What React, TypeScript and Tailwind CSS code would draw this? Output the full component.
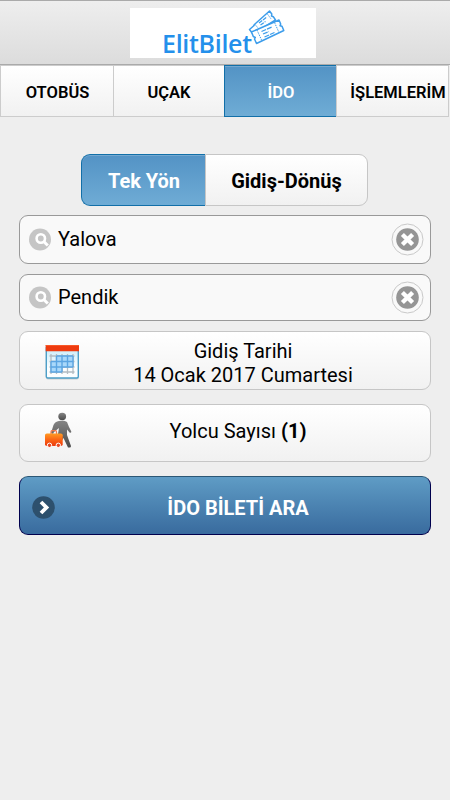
import React from "react";

const tabBase =
  "flex h-[52px] items-center justify-center border-y border-[#ccc] pt-[5px] text-[16.5px] font-semibold leading-none";
const light = "bg-gradient-to-b from-white to-[#f1f1f1]";
const blue = "bg-gradient-to-b from-[#5393c5] to-[#6facd5]";
const field =
  "flex items-center rounded-[9px] border border-[#999] bg-[#f9f9f9] pl-[9px] pr-[6px] text-[20px]";
const card =
  "flex items-center rounded-[9px] border border-[#c6c6c6] text-[20px] leading-6 bg-gradient-to-b from-white to-[#f1f1f1]";

function Tickets() {
  return (
    <svg className="absolute left-[118px] top-[1px]" width="38" height="37" viewBox="0 0 38 37" fill="none" stroke="#3d9deb" strokeWidth="1.5" strokeLinejoin="round">
      <path d="m1.500 20.500 4-3.500 1-1.500 1-1L21.500 2l2.300 3-.3 2 1.800.7 2.200 3.300L5 25z" fill="white" />
      <path d="m7 15.500 4 4.500M19 4.500l4.500 6" strokeWidth="1" strokeDasharray="1.500 1" />
      <path d="m11 14 8-6M12.500 16l5-3.500" strokeWidth="1.200" strokeDasharray="4 1" />
      <path d="M3.500 23 31 11l1.700 4-.7 1.700 2 .6 1.800 4.200L8.500 34.500l-2-4.500.8-1.500-2-1z" fill="white" />
      <path d="m9 21 5 11M26.500 13.500l4.500 10" strokeWidth="1" strokeDasharray="1.500 1" />
      <path d="m13.500 22.500 10.500-4.500M15 25l6-2.500M16.500 28l10-4.500" strokeWidth="1.200" strokeDasharray="5 1" />
    </svg>
  );
}

function SearchIcon() {
  return (
    <svg width="22" height="23" viewBox="0 0 22 23" fill="none">
      <circle cx="11" cy="11.500" r="11" fill="#c5c5c5" />
      <circle cx="11.800" cy="10.500" r="4.200" stroke="white" strokeWidth="2.600" />
      <path d="m15 13.700 3.800 3.800" stroke="white" strokeWidth="3" />
    </svg>
  );
}

function ClearIcon() {
  return (
    <svg className="ml-auto" width="33" height="33" viewBox="0 0 33 33" fill="none">
      <circle cx="16.5" cy="16.5" r="15.5" fill="#f9f9f9" stroke="#c9c9c9" />
      <circle cx="16.5" cy="16.5" r="11.3" fill="#959595" />
      <path d="m11.400 11.400 10.200 10.200M21.600 11.400 11.400 21.600" stroke="white" strokeWidth="4.300" />
    </svg>
  );
}

function CalendarIcon() {
  return (
    <svg className="mt-[2px]" width="35" height="36" viewBox="0 0 35 36" fill="none">
      <defs>
        <linearGradient id="page" x1="0" y1="0" x2="0" y2="1">
          <stop stopColor="#c3ebfa" /><stop offset=".7" stopColor="#fbfeff" />
        </linearGradient>
      </defs>
      <rect x=".8" y="3" width="33" height="32.5" rx="2" fill="#8c9ca3" opacity=".4" />
      <rect x="1.300" y="2" width="32" height="32" rx="1.500" fill="url(#page)" stroke="#4d9fc8" strokeWidth="1.400" />
      <path d="M6 10v20M11.500 10v20M17 10v20M22.500 10v20M28 10v20M4.500 12h25M4.500 17.500h25M4.500 23h25M4.500 28h25" stroke="#b3bcc2" strokeWidth="1.300" />
      <path d="M11.500 12H28v11H17v5H6V17.500h5.500z" fill="#a9d8fa" />
      <path d="M6 17.500h22M6 23h22M11.500 12v16M17 12v16M22.500 12v11M28 12v11M11.500 12H28M6 17.500V28h11" stroke="#5ba5e2" strokeWidth="1.400" />
      <path d="M.7 1h33.300v6.300H.7z" fill="#ee3b10" />
      <path d="M.7 1h33.300v1H.7z" fill="#f85828" />
    </svg>
  );
}

function TravelerIcon() {
  return (
    <svg className="-mt-[6px]" width="27" height="36" viewBox="0 0 27 36" fill="none">
      <defs>
        <linearGradient id="body" x1="0" y1="0" x2="0" y2="1">
          <stop stopColor="#858585" /><stop offset="1" stopColor="#4c4c4c" />
        </linearGradient>
        <linearGradient id="bag" x1="0" y1="0" x2="0" y2="1">
          <stop stopColor="#ff9b24" /><stop offset=".5" stopColor="#fb6415" /><stop offset="1" stopColor="#eb390d" />
        </linearGradient>
      </defs>
      <ellipse cx="17.200" cy="4.400" rx="3.900" ry="3.700" fill="url(#body)" />
      <path d="M14 9q5-1.500 8 1l2 5 2.300 4.500q.2 1.500-1.500 1.300L22 17.500V23l4 11q0 1.500-1.300 1.500H23L18.500 26 14 33l-3 1 3-18-5 4-1 2-2-1 2.500-8Q10 9.500 14 9z" fill="url(#body)" />
      <path d="M6 22v-2.300q0-1 1-1h3.500q1 0 1 1V22" stroke="#f2774a" strokeWidth="1.200" />
      <rect x="0" y="21.500" width="17.700" height="12.500" rx="1.800" fill="url(#bag)" />
      <circle cx="4.500" cy="33.300" r="2.200" fill="#e54a25" stroke="white" />
      <circle cx="13.300" cy="33.300" r="2.200" fill="#e54a25" stroke="white" />
    </svg>
  );
}

export default function App() {
  return (
    <div className="h-[800px] w-[450px] overflow-hidden bg-[#eee] font-['Roboto',sans-serif] text-black">
      <header className="flex h-[65px] items-center justify-center border-b border-t border-[#aaa] bg-gradient-to-b from-[#eee] to-[#dcdcdc] pr-[4px]">
        <div className="relative h-[50px] w-[186px] bg-white">
          <div className="absolute left-[32px] top-[22px] font-['Open_Sans',sans-serif] text-[25px] font-semibold leading-[26px] tracking-[-0.3px] text-[#2490eb]">ElitBilet</div>
          <Tickets />
        </div>
      </header>

      <nav className="flex">
        <div className={`${tabBase} ${light} w-[113px] border-l pl-[1px]`}>OTOBÜS</div>
        <div className={`${tabBase} ${light} w-[111px] border-l`}>UÇAK</div>
        <div className={`${tabBase} ${blue} w-[112px] border-l border-[#126fa8]! pl-[1px] text-white shadow-[inset_0_1px_#74a8d0]`}>İDO</div>
        <div className={`${tabBase} ${light} w-[113px] whitespace-nowrap border-x pl-[11px]`}>İŞLEMLERİM</div>
      </nav>

      <main className="flex flex-col px-[19px] pt-[37px]">
        <div className="ml-[62px] flex h-[52px] w-[287px] text-[20px] font-bold leading-none">
          <div className={`${blue} flex w-[124px] items-center justify-center rounded-l-[9px] border border-r-0 border-[#126fa8] pt-[2px] pl-[1px] text-white shadow-[inset_0_1px_#74a8d0]`}>Tek Yön</div>
          <div className={`${light} flex w-[163px] items-center justify-center rounded-r-[9px] border border-[#c6c6c6] pt-[2px]`}>Gidiş-Dönüş</div>
        </div>

        <div className={`${field} mt-[9px] h-[49px]`}>
          <SearchIcon /><span className="ml-[7px] -mt-[1px]">Yalova</span><ClearIcon />
        </div>
        <div className={`${field} mt-[10px] h-[47px]`}>
          <SearchIcon /><span className="ml-[7px] -mt-[1px]">Pendik</span><ClearIcon />
        </div>

        <div className={`${card} mt-[10px] h-[59px] pl-[25px]`}>
          <CalendarIcon />
          <div className="ml-[11px] w-[304px] pt-[5px] text-center">Gidiş Tarihi<br />14 Ocak 2017 Cumartesi</div>
        </div>
        <div className={`${card} mt-[14px] h-[58px] pl-[25px]`}>
          <TravelerIcon />
          <div className="ml-[14px] w-[304px] pb-[4px] text-center">Yolcu Sayısı <b>(1)</b></div>
        </div>

        <button className="mt-[14px] flex h-[59px] items-center rounded-[9px] border border-[#00004d] border-t-[#2b5775] bg-gradient-to-b from-[#5f9cc5] to-[#396b9e] pl-[12px] text-[20px] font-bold text-white">
          <svg className="mt-[4px]" width="23" height="23" viewBox="0 0 23 23" fill="none">
            <circle cx="11.500" cy="11.500" r="11.300" fill="#2d506d" />
            <path d="m9 6 5.500 5.500L9 17" stroke="white" strokeWidth="3.800" />
          </svg>
          <span className="ml-[31px] w-[304px] pt-[4px] text-center">İDO BİLETİ ARA</span>
        </button>
      </main>
    </div>
  );
}
